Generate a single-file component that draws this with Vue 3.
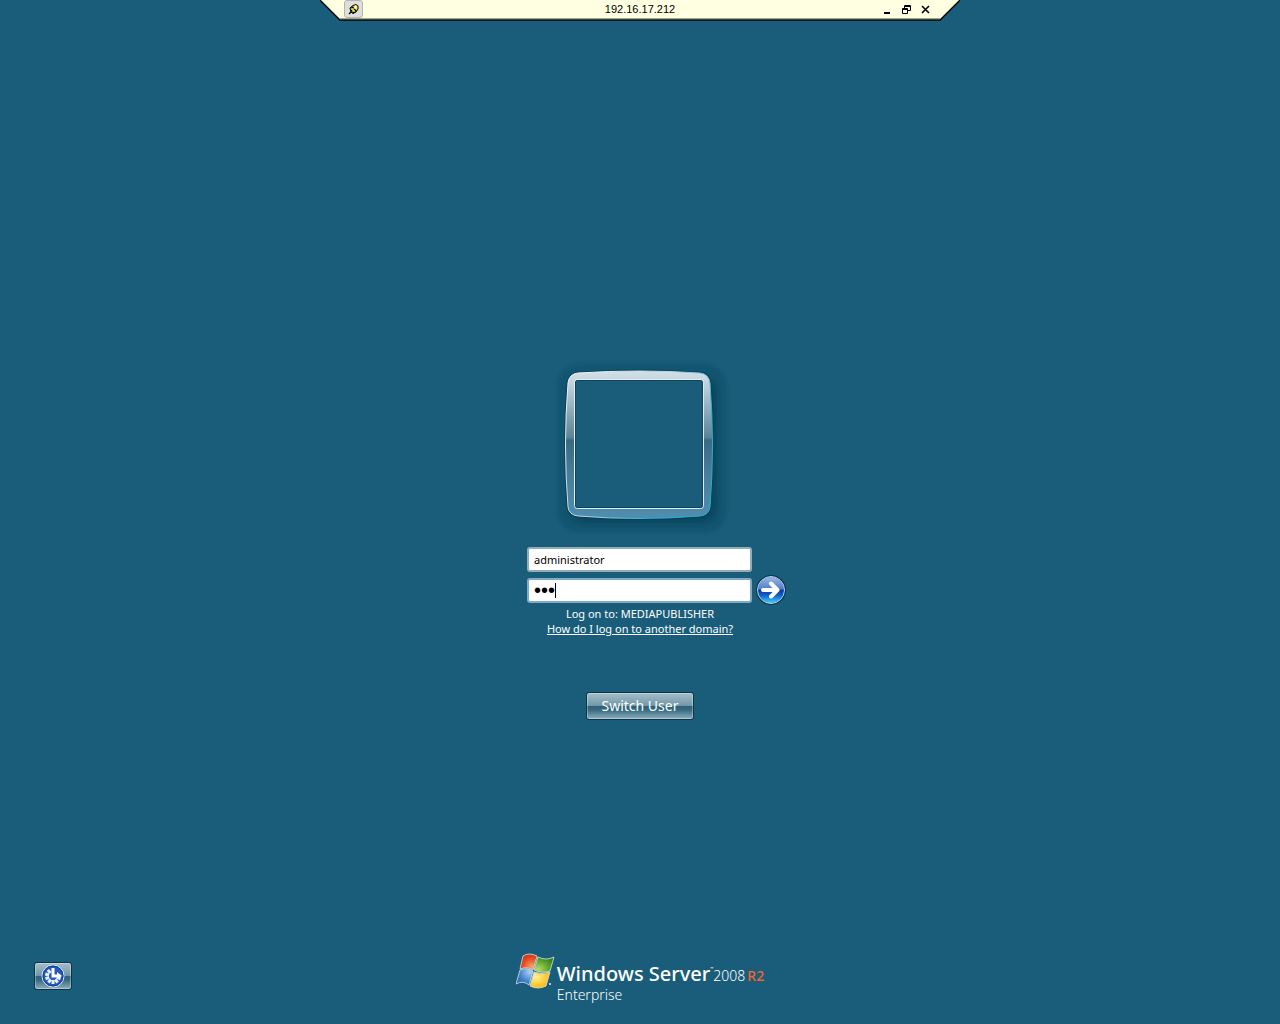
<script setup>
import { ref } from 'vue'

const user = ref('administrator')
const password = ref('abc')
const pieces = [110, 145, 180, 215, 250, 285, 320]
</script>

<template>
  <div class="screen">
    <header class="connection">
      <svg class="shape" viewBox="0 0 640 21" aria-hidden="true">
        <path d="M0 0H640L620 20H20Z" fill="#ffffe1" />
        <path d="M20 18.500H620" stroke="#a5a58d" />
        <path d="M0 0L20 20H620L640 0" fill="none" stroke="#000" stroke-width="1.300" />
      </svg>
      <button class="pin" type="button" aria-label="Pin the connection bar">
        <svg width="11" height="11" viewBox="0 0 11 11">
          <path d="M1 10L4 7" stroke="#000" stroke-width="1.300" />
          <path d="M2 4L5 1.500L8 0.500L10 2V5L8 8L5 9.500L3 8Z" fill="#f8f34c" stroke="#000" />
          <path d="M5 2L6.500 5L9 6L7 8.500L5 9.500L3 7L2.500 4Z" fill="#000" />
          <path d="M3 5H5V7H7" fill="none" stroke="#f8f34c" stroke-width="1.500" />
          <path d="M7 2H8V4" fill="none" stroke="#fff" />
        </svg>
      </button>
      <span class="address">192.16.17.212</span>
      <div class="controls">
        <button type="button" aria-label="Minimize">
          <svg width="9" height="9" viewBox="0 0 9 9"><path d="M1 8H7" stroke="#000" stroke-width="2" /></svg>
        </button>
        <button type="button" aria-label="Restore">
          <svg width="9" height="9" viewBox="0 0 9 9" fill="none" stroke="#000">
            <path d="M2.500 3V0.500H8.500V5.500H6M2 1.500H9" />
            <path d="M0.500 3.500H5.500V8.500H0.500ZM0 4.500H6" />
          </svg>
        </button>
        <button type="button" aria-label="Close">
          <svg width="9" height="9" viewBox="0 0 9 9"><path d="M1 1L8 8M8 1L1 8" stroke="#000" stroke-width="1.600" /></svg>
        </button>
      </div>
    </header>

    <main>
      <svg class="portrait" width="190" height="185" viewBox="0 0 190 185" aria-hidden="true">
        <defs>
          <linearGradient id="frame" x1="0" y1="0" x2="0" y2="1">
            <stop offset="0" stop-color="#d3e0e8" />
            <stop offset="0.080" stop-color="#c3d3dd" />
            <stop offset="0.450" stop-color="#5c8496" />
            <stop offset="0.470" stop-color="#3a6a80" />
            <stop offset="0.700" stop-color="#4a7d99" />
            <stop offset="1" stop-color="#4f8db0" />
          </linearGradient>
          <linearGradient id="edge" x1="0" y1="0" x2="1" y2="0.600">
            <stop offset="0" stop-color="#f4f8fa" />
            <stop offset="0.550" stop-color="#b8d3dd" />
            <stop offset="0.850" stop-color="#22b4d2" />
          </linearGradient>
          <filter id="soft" x="-20%" y="-20%" width="140%" height="140%"><feGaussianBlur stdDeviation="4" /></filter>
          <filter id="halo" x="-20%" y="-20%" width="140%" height="140%"><feGaussianBlur stdDeviation="1.500" /></filter>
          <mask id="opening">
            <rect width="190" height="185" fill="#fff" />
            <rect x="30" y="25" width="128" height="128" rx="3" fill="#000" />
          </mask>
        </defs>
        <g mask="url(#opening)">
          <rect x="12" y="8" width="170" height="170" rx="22" fill="#0c5068" opacity="0.400" filter="url(#halo)" />
          <rect x="24" y="22" width="148" height="146" rx="14" fill="#06384c" opacity="0.550" filter="url(#soft)" />
          <path d="M33 18Q94 14 155 18Q164 19 165 28Q170 90 165 152Q164 160 155 161Q94 166 33 161Q24 160 23 152Q18 90 23 28Q24 19 33 18Z" fill="url(#frame)" stroke="#0a3b50" stroke-width="3" stroke-opacity="0.600" paint-order="stroke" />
          <path d="M33 18Q94 14 155 18Q164 19 165 28Q170 90 165 152Q164 160 155 161Q94 166 33 161Q24 160 23 152Q18 90 23 28Q24 19 33 18Z" fill="none" stroke="url(#edge)" />
        </g>
        <rect x="29.500" y="24.500" width="129" height="129" rx="3" fill="none" stroke="#e3edf2" />
        <rect x="30.500" y="25.500" width="127" height="127" rx="2" fill="none" stroke="#10445b" />
      </svg>

      <form class="logon" @submit.prevent>
        <input v-model="user" class="field" type="text" aria-label="User name" />
        <div class="secret">
          <input v-model="password" class="field" type="password" aria-label="Password" />
          <i class="caret"></i>
        </div>
        <button class="go" type="submit" aria-label="Log on">
          <svg width="30" height="30" viewBox="0 0 30 30">
            <defs>
              <linearGradient id="ball" x1="0" y1="0" x2="0" y2="1">
                <stop offset="0" stop-color="#9fbde6" />
                <stop offset="0.470" stop-color="#4f7ccc" />
                <stop offset="0.500" stop-color="#06359a" />
                <stop offset="0.700" stop-color="#1462ce" />
                <stop offset="1" stop-color="#3ee2ff" />
              </linearGradient>
            </defs>
            <circle cx="15" cy="15" r="14" fill="url(#ball)" stroke="#0d3450" stroke-width="2" />
            <circle cx="15" cy="15" r="13.500" fill="none" stroke="#b8d8ec" />
            <path d="M7 15H21M15 8.500L21.500 15L15 21.500" fill="none" stroke="#fff" stroke-width="4" stroke-linejoin="round" stroke-linecap="round" />
          </svg>
        </button>
      </form>
      <p class="domain">Log on to: MEDIAPUBLISHER</p>
      <a class="help" href="#">How do I log on to another domain?</a>
      <button class="glass switch" type="button">Switch User</button>
    </main>

    <footer>
      <button class="glass ease" type="button" aria-label="Ease of access">
        <svg width="24" height="24" viewBox="0 0 24 24">
          <circle cx="12" cy="12" r="11" fill="#2458b8" stroke="#e4edf7" />
          <circle cx="12" cy="12" r="10" fill="none" stroke="#153f96" />
          <path v-for="angle in pieces" :key="angle" d="M12 4V8" :transform="`rotate(${angle} 12 12)`" stroke="#e8f0fb" stroke-width="3" />
          <path d="M12 4V12H17" fill="none" stroke="#fff" stroke-width="3" />
          <path d="M16 8L21 12L16 15Z" fill="#fff" />
        </svg>
      </button>
      <div class="brand">
        <svg width="41" height="40" viewBox="0 0 41 40" aria-hidden="true">
          <defs>
            <radialGradient id="red" cx="0.700" cy="0.800" r="0.900"><stop stop-color="#f7a36a" /><stop offset="0.600" stop-color="#e5491f" /><stop offset="1" stop-color="#c83010" /></radialGradient>
            <radialGradient id="green" cx="0.200" cy="0.800" r="0.900"><stop stop-color="#b5d965" /><stop offset="0.600" stop-color="#5da62d" /><stop offset="1" stop-color="#34801e" /></radialGradient>
            <radialGradient id="blue" cx="0.800" cy="0.200" r="1"><stop stop-color="#a9d0f2" /><stop offset="0.600" stop-color="#427fc8" /><stop offset="1" stop-color="#285aa8" /></radialGradient>
            <radialGradient id="yellow" cx="0.300" cy="0.300" r="1"><stop stop-color="#fff094" /><stop offset="0.600" stop-color="#ffc222" /><stop offset="1" stop-color="#e99c0b" /></radialGradient>
          </defs>
          <g stroke="#d8e3e8" stroke-width="0.800" stroke-linejoin="round">
            <path d="M7 3Q13 -1 21 3L17 17Q11 13 4 16Z" fill="url(#red)" />
            <path d="M22 4Q30 8 38 4L34 18Q26 21 18 17Z" fill="url(#green)" />
            <path d="M4 17Q11 14 17 18L13 32Q7 27 0 31Z" fill="url(#blue)" />
            <path d="M18 19Q26 22 34 19L30 33Q22 37 14 33Z" fill="url(#yellow)" />
          </g>
          <circle cx="34" cy="31" r="1" fill="#e8f0f4" />
        </svg>
        <div class="wordmark">
          <div class="product"><strong>Windows Server</strong><sup>™</sup><span class="year">2008</span><span class="release">R2</span></div>
          <div class="edition">Enterprise</div>
        </div>
      </div>
    </footer>
  </div>
</template>

<style>
body {
  background: #195d7b;
}
</style>

<style scoped>
.screen {
  box-sizing: border-box;
  min-height: 100vh;
  display: flex;
  flex-direction: column;
  background: #195d7b;
  color: #fff;
  font: 11px/15px "Noto Sans", "Open Sans", sans-serif;
}
button {
  padding: 0;
  border: 0;
  background: none;
  color: inherit;
  font: inherit;
}
svg {
  display: block;
}
.connection {
  position: relative;
  align-self: center;
  box-sizing: border-box;
  width: 50%;
  min-width: 320px;
  height: 21px;
  padding: 0 24px 3px;
  display: grid;
  grid-template-columns: 1fr auto 1fr;
  align-items: center;
  color: #000;
  font: 11px/18px "Liberation Sans", Arial, sans-serif;
}
.shape {
  position: absolute;
  inset: 0;
  width: 100%;
  height: 21px;
}
.connection > :not(.shape) {
  position: relative;
}
.pin {
  width: 19px;
  height: 18px;
  display: grid;
  place-items: center;
  border: 1px solid #b5b5aa;
  border-radius: 3px;
  background: #dedede;
}
.controls {
  justify-self: end;
  display: flex;
  gap: 10px;
  padding-right: 6px;
}
main {
  flex: 1;
  display: flex;
  flex-direction: column;
  align-items: center;
  justify-content: center;
  padding-top: 114px;
}
.logon {
  margin-top: 7px;
  display: grid;
  grid-template-columns: 30px 225px 31px;
  column-gap: 4px;
  row-gap: 6px;
}
.field {
  grid-column: 2;
  box-sizing: border-box;
  width: 100%;
  height: 25px;
  padding: 0 5px;
  border: 2px solid #91adba;
  border-radius: 3px;
  outline: 0;
  background: #fff;
  color: #000;
  font: 11px/19px "Noto Sans", "Open Sans", sans-serif;
}
.secret {
  grid-column: 2;
  position: relative;
  display: flex;
}
.secret .field {
  border-color: #7fabc7;
  font: 20px/19px "Liberation Sans", Arial, sans-serif;
}
.caret {
  position: absolute;
  left: 28px;
  top: 5px;
  width: 1px;
  height: 15px;
  background: #000;
}
.go {
  grid-column: 3;
  height: 24px;
  display: flex;
  align-items: center;
}
.domain {
  margin: 3px 0 0;
}
.help {
  color: #fff;
}
.glass {
  border: 1px solid #0b3547;
  border-radius: 3px;
  background: linear-gradient(#a5bec9 0%, #7398a8 48%, #2b6279 50%, #36697f 65%, #8eb0be 100%);
  box-shadow: inset 0 0 0 1px #ffffff55;
}
.switch {
  width: 108px;
  height: 28px;
  margin-top: 56px;
  padding-bottom: 2px;
  font-size: 14px;
}
footer {
  box-sizing: border-box;
  display: grid;
  grid-template-columns: 1fr auto 1fr;
  align-items: center;
  height: 84px;
  padding: 0 34px 12px;
}
.ease {
  width: 38px;
  height: 28px;
  display: grid;
  place-items: center;
}
.brand {
  display: flex;
}
.product {
  display: flex;
  align-items: baseline;
  margin-top: 8px;
  line-height: 26px;
}
.product strong {
  font-size: 20px;
  font-weight: 500;
}
.product sup {
  align-self: flex-start;
  font-size: 4px;
  line-height: 16px;
}
.year {
  font-size: 14px;
  font-weight: 300;
}
.release {
  margin-left: 2px;
  color: #f26532;
  font-size: 14px;
  font-weight: 500;
}
.edition {
  font-size: 14px;
  line-height: 11px;
  font-weight: 300;
}
</style>
